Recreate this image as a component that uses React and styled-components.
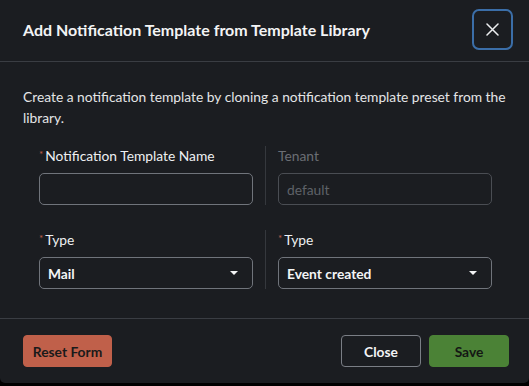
import React from "react";
import styled, { createGlobalStyle } from "styled-components";

const Global = createGlobalStyle`
  html, body { margin: 0; padding: 0; background: #000; }
  body { font-family: Lato, "Noto Sans", sans-serif; color: #e6e7e9; }
  * { box-sizing: border-box; }
`;

const Modal = styled.div`
  width: 529px;
  height: 383px;
  background: #1b1d21;
  border-radius: 0 0 5px 5px;
  display: flex;
  flex-direction: column;
`;

const Header = styled.div`
  height: 62px;
  display: flex;
  align-items: center;
  justify-content: space-between;
  padding: 0 16px 3px 23px;
  border-bottom: 1px solid #3a3d43;
`;

const Title = styled.h2`
  margin: 0;
  font-size: 16px;
  font-weight: 700;
  color: #f3f4f5;
`;

const CloseIcon = styled.button`
  width: 41px;
  height: 41px;
  border: 2px solid #3b6ea8;
  border-radius: 7px;
  background: transparent;
  display: flex;
  align-items: center;
  justify-content: center;
  padding: 0;
  color: #eceef0;
  margin-top: 1px;
`;

const Body = styled.div`
  padding: 24px 23px 0;
  flex: 1;
  border-bottom: 1px solid #3a3d43;
`;

const Description = styled.p`
  margin: 0 0 18px;
  font-size: 13.8px;
  line-height: 21px;
  color: #e4e5e7;
`;

const Form = styled.div`
  padding: 0 10px 0 16px;
  display: flex;
  flex-direction: column;
  gap: 25px;
`;

const Row = styled.div`
  display: flex;
  align-items: stretch;
`;

const Divider = styled.div`
  width: 1px;
  flex-shrink: 0;
  background: #35383d;
  margin: 0 12px;
`;

const Field = styled.div`
  width: 214px;
  flex-shrink: 0;
  display: flex;
  flex-direction: column;
`;

const Label = styled.label`
  font-size: 13.8px;
  line-height: 20px;
  margin-bottom: 7px;
  color: ${(p) => (p.$disabled ? "#6b6e74" : "#eef0f2")};
  display: flex;
  align-items: center;
`;

const Required = styled.span`
  color: #c0604a;
  font-size: 10px;
  line-height: 9px;
  margin: -3px 2px 0 0;
`;

const Input = styled.div`
  height: 32px;
  border: 1px solid ${(p) => (p.$disabled ? "#4a4d53" : "#70747b")};
  border-radius: 5px;
  display: flex;
  align-items: center;
  padding: 0 8px;
  font-size: 13.8px;
  color: #5f6268;
`;

const Select = styled(Input)`
  justify-content: space-between;
  font-weight: 700;
  color: #f3f4f5;
  padding: 0 14px 0 8px;
`;

const Footer = styled.div`
  height: 64px;
  display: flex;
  align-items: center;
  padding: 0 20px 0 23px;
  gap: 8px;
`;

const Button = styled.button`
  height: 32px;
  border-radius: 4px;
  font-family: Lato, "Noto Sans", sans-serif;
  font-size: 13.8px;
  font-weight: 700;
  padding: 0;
  width: ${(p) => p.$w}px;
  background: ${(p) => p.$bg};
  color: ${(p) => p.$fg};
  border: 1px solid ${(p) => p.$border || p.$bg};
`;

const Spacer = styled.div`
  flex: 1;
`;

const Caret = () => (
  <svg width="8" height="4" viewBox="0 0 8 4">
    <path d="M0 0 H8 L4 4 Z" fill="#f3f4f5" />
  </svg>
);

export default function App() {
  return (
    <>
      <Global />
      <Modal>
        <Header>
          <Title>Add Notification Template from Template Library</Title>
          <CloseIcon aria-label="Close">
            <svg width="13" height="13" viewBox="0 0 13 13">
              <path d="M1 1 L12 12 M12 1 L1 12" stroke="currentColor" strokeWidth="1.5" strokeLinecap="round" />
            </svg>
          </CloseIcon>
        </Header>
        <Body>
          <Description>
            Create a notification template by cloning a notification template preset from the library.
          </Description>
          <Form>
            <Row>
              <Field>
                <Label><Required>*</Required>Notification Template Name</Label>
                <Input />
              </Field>
              <Divider />
              <Field>
                <Label $disabled>Tenant</Label>
                <Input $disabled>default</Input>
              </Field>
            </Row>
            <Row>
              <Field>
                <Label><Required>*</Required>Type</Label>
                <Select>Mail<Caret /></Select>
              </Field>
              <Divider />
              <Field>
                <Label><Required>*</Required>Type</Label>
                <Select>Event created<Caret /></Select>
              </Field>
            </Row>
          </Form>
        </Body>
        <Footer>
          <Button $w={89} $bg="#c0604a" $fg="#1a1a1a">Reset Form</Button>
          <Spacer />
          <Button $w={80} $bg="#1b1d21" $fg="#f3f4f5" $border="#7a7e85">Close</Button>
          <Button $w={80} $bg="#4b8236" $fg="#141614">Save</Button>
        </Footer>
      </Modal>
    </>
  );
}
